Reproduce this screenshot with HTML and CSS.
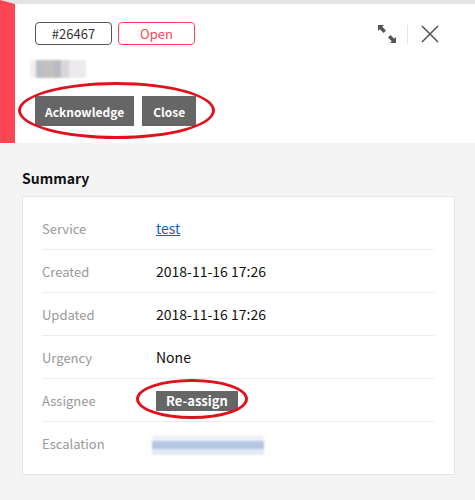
FILE: index.html
```html
<!DOCTYPE html>
<html lang="en">
<head>
  <meta charset="UTF-8" />
  <title>Incident #26467</title>
  <link rel="stylesheet" href="styles.css">
</head>
<body>
  <div class="header">
    <div class="header-body">
      <div class="tags">
        <span class="tag">#26467</span>
        <span class="tag tag-open">Open</span>
      </div>
      <div class="blurred-title"></div>
      <div class="actions">
        <button class="btn">Acknowledge</button>
        <button class="btn">Close</button>
        <span class="mark mark-actions"></span>
      </div>
    </div>
    <div class="tools">
      <svg class="icon-expand" width="18" height="18" viewBox="0 0 18 18">
        <path d="M0 0 H6 L4.2 1.8 L8 5.6 L5.6 8 L1.8 4.2 L0 6 Z" fill="#555"/>
        <path d="M18 18 H12 L13.8 16.2 L10 12.4 L12.4 10 L16.2 13.8 L18 12 Z" fill="#555"/>
      </svg>
      <span class="tool-sep"></span>
      <svg class="icon-close" width="18" height="18" viewBox="0 0 18 18">
        <path d="M1 1 L17 17 M17 1 L1 17" stroke="#555" stroke-width="1.6" fill="none"/>
      </svg>
    </div>
  </div>

  <div class="content">
    <h2>Summary</h2>
    <div class="card">
      <div class="row">
        <div class="label">Service</div>
        <div class="value"><a href="#">test</a></div>
      </div>
      <div class="row">
        <div class="label">Created</div>
        <div class="value">2018-11-16 17:26</div>
      </div>
      <div class="row">
        <div class="label">Updated</div>
        <div class="value">2018-11-16 17:26</div>
      </div>
      <div class="row">
        <div class="label">Urgency</div>
        <div class="value">None</div>
      </div>
      <div class="row">
        <div class="label">Assignee</div>
        <div class="value">
          <span class="assign-wrap">
            <button class="btn btn-small">Re-assign</button>
            <span class="mark mark-assign"></span>
          </span>
        </div>
      </div>
      <div class="row">
        <div class="label">Escalation</div>
        <div class="value"><span class="blurred-link"></span></div>
      </div>
    </div>
  </div>
</body>
</html>
```

FILE: styles.css
```css
html, body {
  margin: 0;
  padding: 0;
  background: #f4f4f4;
  font-family: "Noto Sans CJK KR", "Noto Sans", sans-serif;
  color: #111;
}
.header {
  position: relative;
  display: flex;
  justify-content: space-between;
  background: #fff;
  border-top: 4px solid #e4e4e4;
  border-left: 15px solid #ff4552;
  height: 143px;
  box-sizing: border-box;
}
.header-body {
  padding: 18px 0 0 20px;
}
.tags {
  display: flex;
  gap: 6px;
}
.tag {
  display: inline-flex;
  align-items: center;
  justify-content: center;
  width: 77px;
  height: 23px;
  box-sizing: border-box;
  border: 1px solid #555;
  border-radius: 4px;
  font-size: 13px;
  color: #333;
}
.tag-open {
  border-color: #ff4552;
  color: #ff4552;
}
.blurred-title {
  width: 56px;
  height: 18px;
  margin: 15px 0 0 -5px;
  background: linear-gradient(to right, #f3ebe6 0 10%, #a8b0bc 10% 25%, #b5b1ae 25% 42%, #a9aab3 42% 55%, #cfcdd0 55% 70%, #e8e6e8 70% 100%);
  opacity: 0.8;
  filter: blur(1px);
}
.actions {
  position: relative;
  display: flex;
  gap: 8px;
  margin-top: 18px;
}
.btn {
  background: #666;
  color: #fff;
  border: none;
  font-family: inherit;
  font-size: 12px;
  font-weight: bold;
  height: 30px;
  padding: 0 10px;
  cursor: pointer;
}
.btn + .btn {
  padding: 0 11px;
}
.btn-small {
  height: 20px;
  font-size: 13px;
  padding: 0 10px;
  line-height: 20px;
}
.mark {
  position: absolute;
  border: 3px solid #e0111c;
  border-radius: 50%;
  pointer-events: none;
}
.mark-actions {
  left: -17px;
  top: -14px;
  width: 191px;
  height: 51px;
}
.tools {
  display: flex;
  align-items: flex-start;
  padding: 21px 36px 0 0;
}
.icon-expand {
  margin-left: 2px;
}
.tool-sep {
  width: 1px;
  height: 19px;
  background: #e6e6e6;
  margin: 0 13px 0 11px;
}
.content {
  padding: 25px 20px 22px 22px;
}
h2 {
  font-size: 14px;
  font-weight: bold;
  margin: 0 0 8px 0;
  color: #111;
}
.card {
  background: #fff;
  border: 1px solid #e6e6e6;
  padding: 10px 19px 10px 19px;
}
.row {
  display: flex;
  align-items: center;
  height: 42px;
  border-bottom: 1px solid #ececec;
}
.row:last-child {
  border-bottom: none;
}
.label {
  width: 114px;
  font-size: 13px;
  color: #999;
}
.value {
  font-size: 14px;
  color: #111;
}
.value a {
  color: #1560c0;
}
.assign-wrap {
  position: relative;
  display: inline-block;
}
.mark-assign {
  left: -20px;
  top: -11px;
  width: 106px;
  height: 34px;
}
.blurred-link {
  display: block;
  width: 112px;
  height: 20px;
  margin: 3px 0 0 -4px;
  background: linear-gradient(to bottom, #eef2f8 0 30%, #b4c6e2 30% 70%, #e3eaf4 70% 100%);
  filter: blur(1px);
}
```
